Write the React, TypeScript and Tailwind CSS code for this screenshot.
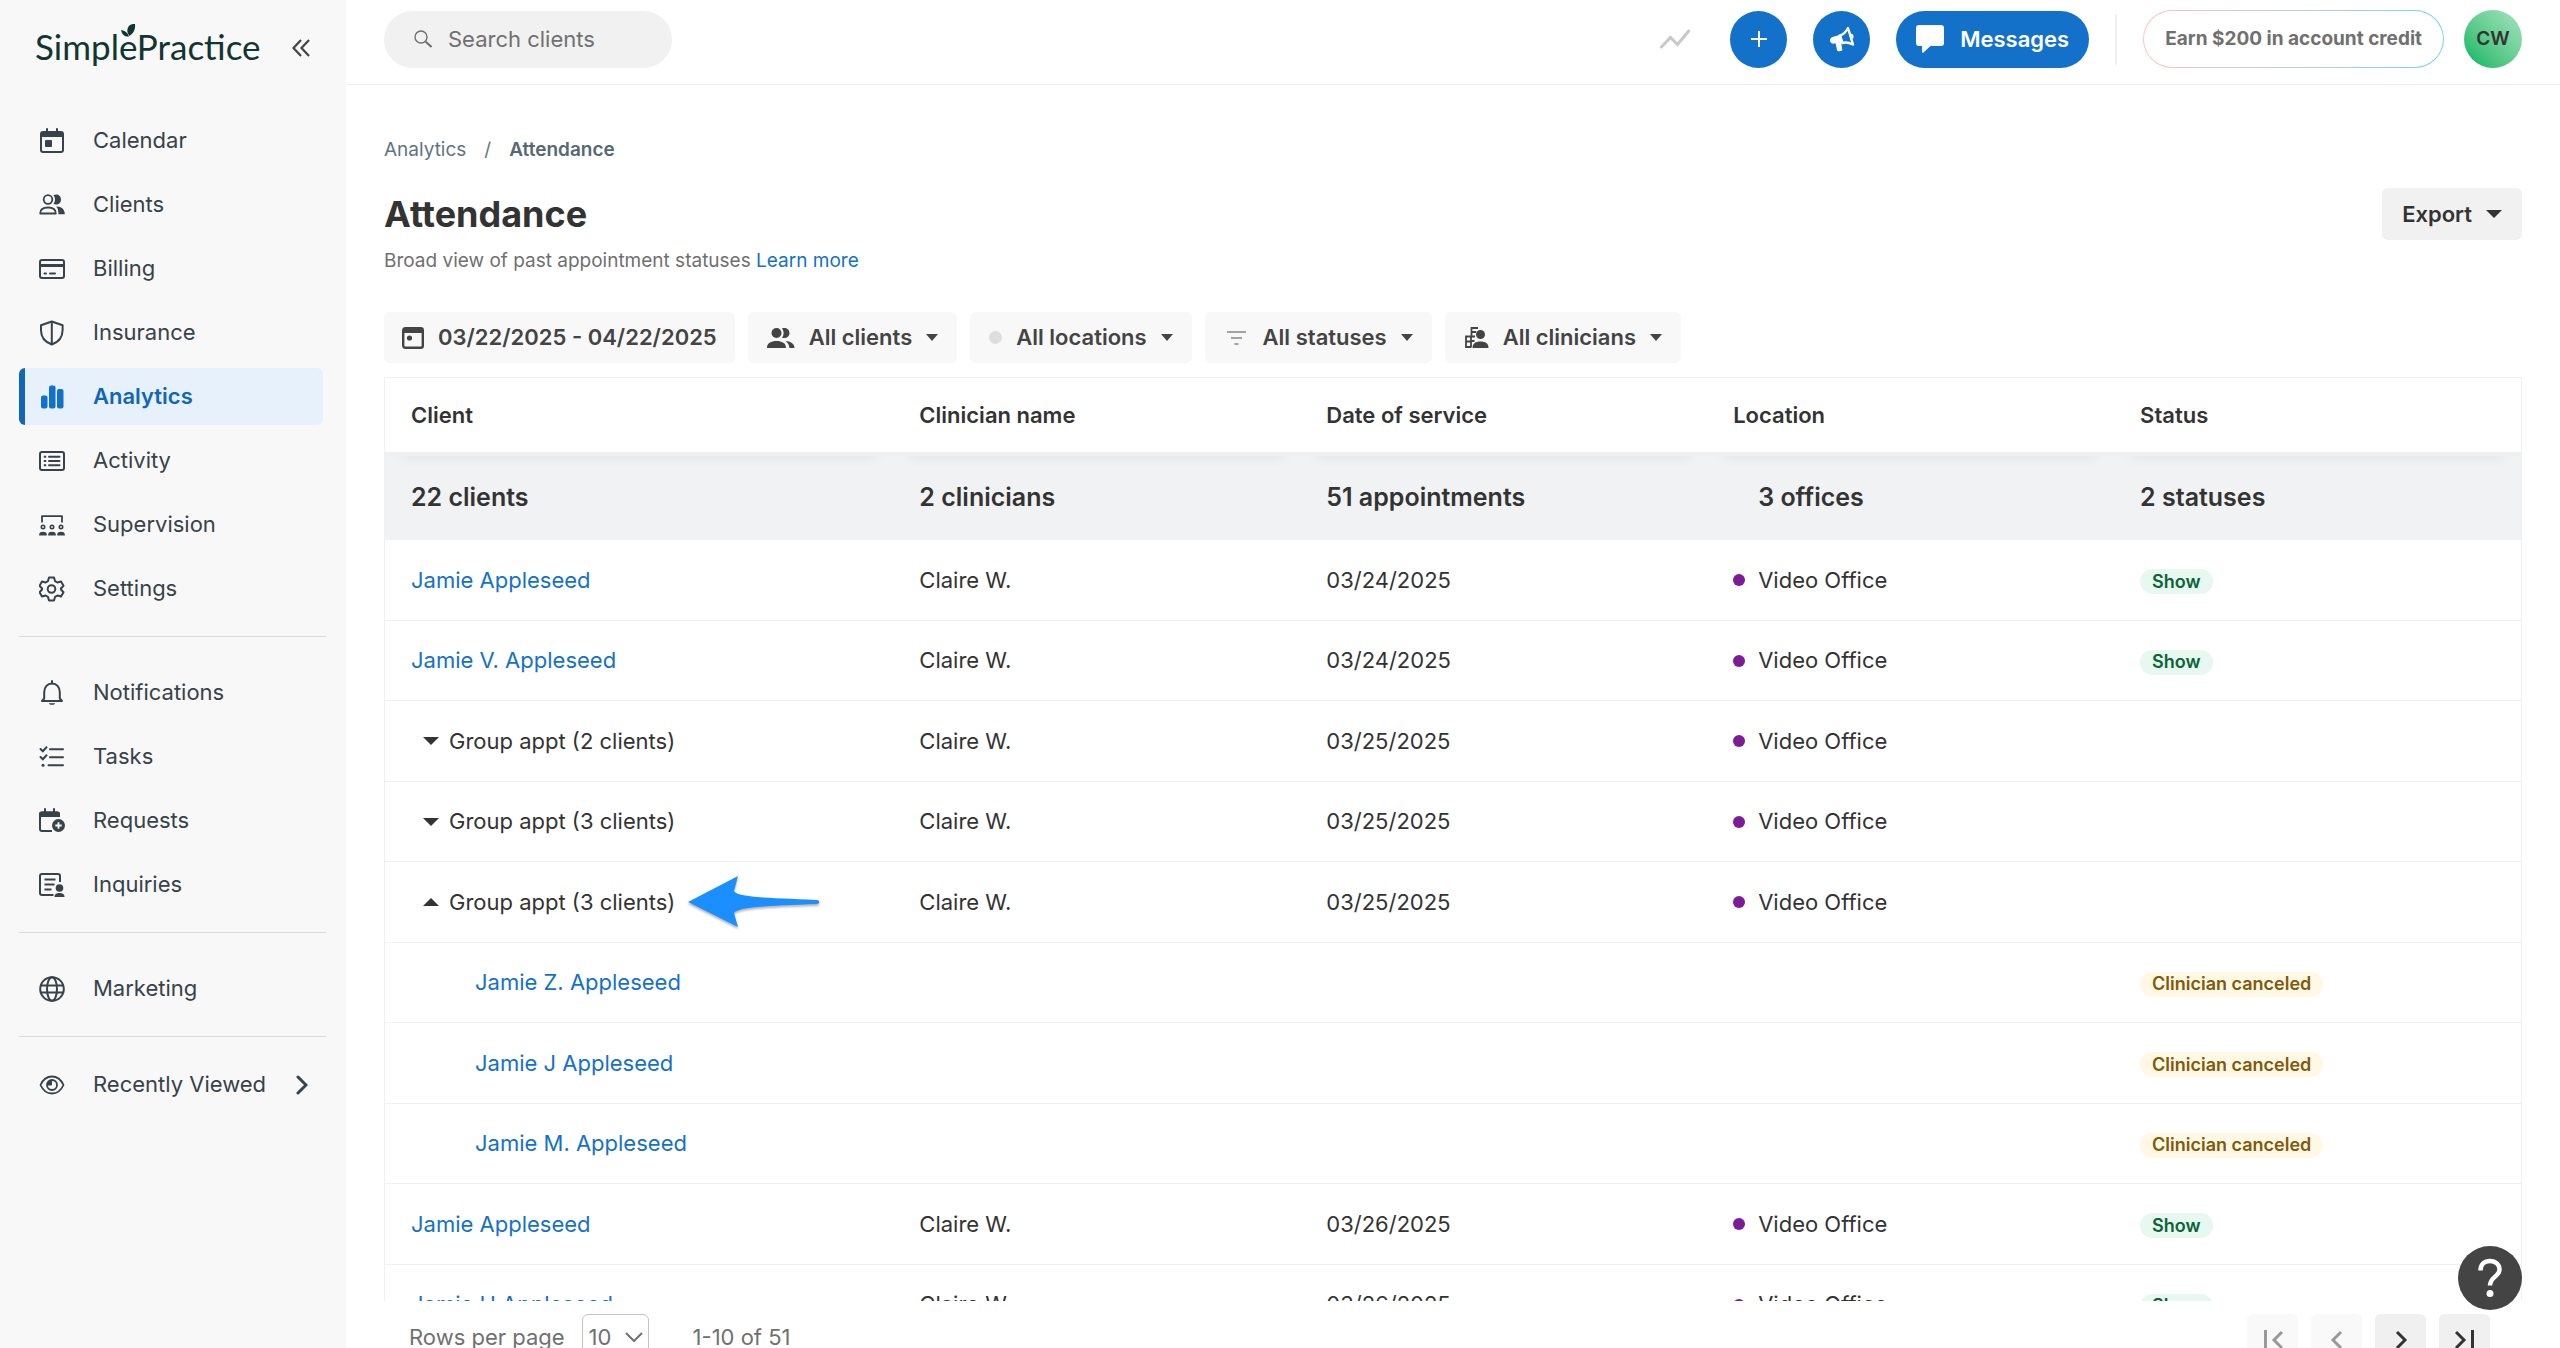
import React from "react";

const Icon = ({ children, className = "size-[26px]" }: { children: React.ReactNode; className?: string }) => (
  <svg viewBox="0 0 26 26" fill="none" stroke="currentColor" strokeWidth="2" className={`shrink-0 ${className}`} aria-hidden="true">
    {children}
  </svg>
);

const CalendarIcon = () => (
  <Icon>
    <rect x="2" y="4" width="22" height="20" rx="2" />
    <path d="M2 4h22v5H2z" fill="currentColor" stroke="none" />
    <path d="M8 1v3M18 1v3" strokeLinecap="round" />
    <rect x="6" y="12" width="7" height="7" rx="1" fill="currentColor" stroke="none" />
  </Icon>
);

const DateRangeIcon = () => (
  <svg viewBox="0 0 22 22" className="size-[22px] shrink-0" fill="none" stroke="currentColor" strokeWidth="2.4" aria-hidden="true">
    <rect x="1.2" y="1.2" width="19.6" height="19.6" rx="2" />
    <path d="M1 1h20v5H1z" fill="currentColor" stroke="none" />
    <circle cx="7.5" cy="11" r="2.6" fill="currentColor" stroke="none" />
  </svg>
);

const ClientsIcon = () => (
  <Icon>
    <circle cx="9" cy="7.5" r="4.3" strokeWidth="1.8" />
    <path d="M1.2 21.5c0-4 3.2-6 7.8-6s7.8 2 7.8 6z" strokeWidth="1.8" strokeLinejoin="round" />
    <path d="M14.5 3c4-1.6 7.5.6 7.5 4.5s-3.5 6-7.5 4.500c2-3 2-6 0-9zM17.2 14.5c5-.3 8.6 2.5 8.6 7.8h-6.3c0-3.300-.5-5.800-2.300-7.800z" fill="currentColor" stroke="none" />
  </Icon>
);

const BillingIcon = () => (
  <Icon>
    <rect x="1" y="4" width="24" height="18" rx="2" />
    <path d="M1 9.5h24" strokeWidth="3" />
    <path d="M5.500 17.500h1.500M11 17.500h5" strokeLinecap="round" />
  </Icon>
);

const InsuranceIcon = () => (
  <Icon>
    <path d="M12.8 1.5 2 5.2v5c0 7 4.5 12 10.8 14.3 6.3-2.3 10.8-7.3 10.8-14.3v-5zM12.8 1.5v23" strokeLinejoin="round" />
  </Icon>
);

const AnalyticsIcon = () => (
  <Icon>
    <g fill="#1471c9" stroke="none">
      <rect x="2" y="11.5" width="6.5" height="13" rx="2" />
      <rect x="10" y="1.5" width="6.5" height="23" rx="2" />
      <rect x="18" y="5" width="6.5" height="19.5" rx="2" />
    </g>
  </Icon>
);

const ActivityIcon = () => (
  <Icon>
    <rect x="1" y="4" width="24" height="18" rx="2" />
    <path d="M10 8.8h10.500M10 13h10.500M10 17.200h10.500" strokeLinecap="round" />
    <path d="M6 7.800v2M6 12v2M6 16.200v2" strokeWidth="2.4" />
  </Icon>
);

const SupervisionIcon = () => (
  <Icon>
    <path d="M3 10.500V4.200h20v6.300" strokeWidth="1.8" strokeLinejoin="round" />
    {[4, 13, 22].map((x) => (
      <g key={x}>
        <circle cx={x} cy="15" r="1.7" strokeWidth="1.6" />
        <path d={`M${x - 3.8} 23.5v-1c0-2 1.800-2.700 3.800-2.700s3.800.700 3.800 2.700v1z`} fill="currentColor" stroke="none" />
      </g>
    ))}
  </Icon>
);

const SettingsIcon = () => (
  <Icon>
    <circle cx="12.5" cy="13" r="3.8" />
    <path
      d="M10 1.500h5l1 3.600 2.400 1.400 3.600-1 2.500 4.300-2.600 2.700v1l2.600 2.700-2.500 4.300-3.600-1-2.400 1.400-1 3.600h-5l-1-3.600-2.400-1.400-3.600 1L.5 16.200l2.600-2.700v-1L.5 9.800 3 5.500l3.600 1L9 5.100z"
      strokeLinejoin="round"
    />
  </Icon>
);

const BellIcon = () => (
  <Icon>
    <path d="M3 21h20l-2.200-2.500V12c0-4.500-2.800-8.500-7.800-8.500S5.200 7.500 5.200 12v6.500z" strokeLinejoin="round" />
    <path d="M13 1v2.500" strokeLinecap="round" />
    <path d="M9.800 23.200h6.400c-.6 2-5.800 2-6.400 0z" fill="currentColor" stroke="none" />
  </Icon>
);

const TasksIcon = () => (
  <Icon>
    <path d="M11 5.200h13M11 13.200h13M9.500 21.200H24" strokeLinecap="round" />
    <path d="m1.500 5 2.300 2.200 3.700-4M1.500 13l2.300 2.200 3.700-4" strokeLinecap="round" />
    <circle cx="4" cy="21.2" r="1.5" fill="currentColor" stroke="none" />
  </Icon>
);

const RequestsIcon = () => (
  <Icon>
    <path d="M13 23H3c-1 0-2-.8-2-2V6.500c0-1 1-2 2-2h15c1 0 2 1 2 2" />
    <path d="M0 9V6c0-1.500 1-2.500 2.500-2.500h16C20 3.500 21 4.500 21 6v3z" fill="currentColor" stroke="none" />
    <path d="M6 1v3M15 1v3" strokeLinecap="round" />
    <circle cx="19.5" cy="17.5" r="6.5" fill="currentColor" stroke="none" />
    <path d="M19.500 14.300v6.400M16.300 17.500h6.400" stroke="#f8f8f8" strokeWidth="1.8" />
  </Icon>
);

const InquiriesIcon = () => (
  <Icon>
    <path d="M14.500 23H3c-1 0-2-.8-2-2V4c0-1 1-2 2-2h16c1 0 2 1 2 2v6" />
    <path d="M5.500 7.500h11M5.500 12.500h10M5.500 17.500h7" />
    <circle cx="20.5" cy="16" r="3.8" fill="currentColor" stroke="none" />
    <path d="M15.500 25c0-3 2-4 5-4s5 1 5 4z" fill="currentColor" stroke="none" />
  </Icon>
);

const GlobeIcon = () => (
  <Icon>
    <circle cx="13" cy="13" r="11.8" />
    <ellipse cx="13" cy="13" rx="5" ry="11.8" />
    <path d="M2 9.500h22M2 16.500h22" />
  </Icon>
);

const EyeIcon = () => (
  <Icon>
    <path d="M1.500 13C4 7.500 8 4.500 13 4.500S22 7.500 24.500 13c-2.500 5.500-6.500 8.500-11.500 8.500S4 18.500 1.500 13z" strokeWidth="1.8" />
    <circle cx="13" cy="13" r="5" strokeWidth="1.8" />
    <path d="M13 8v4c0 1-.5 1.500-1.500 1.500H8C8 10 10 8 13 8z" fill="currentColor" stroke="none" />
  </Icon>
);

const Caret = ({ className = "w-3 h-2", up = false }: { className?: string; up?: boolean }) => (
  <svg viewBox="0 0 12 7" preserveAspectRatio="none" fill="currentColor" className={`shrink-0 ${className}`} aria-hidden="true">
    <path d={up ? "M0 7h12L6 0z" : "M0 0h12L6 7z"} />
  </svg>
);

const mainNav = [
  { label: "Calendar", icon: <CalendarIcon /> },
  { label: "Clients", icon: <ClientsIcon /> },
  { label: "Billing", icon: <BillingIcon /> },
  { label: "Insurance", icon: <InsuranceIcon /> },
  { label: "Analytics", icon: <AnalyticsIcon />, active: true },
  { label: "Activity", icon: <ActivityIcon /> },
  { label: "Supervision", icon: <SupervisionIcon /> },
  { label: "Settings", icon: <SettingsIcon /> },
];

const workNav = [
  { label: "Notifications", icon: <BellIcon /> },
  { label: "Tasks", icon: <TasksIcon /> },
  { label: "Requests", icon: <RequestsIcon /> },
  { label: "Inquiries", icon: <InquiriesIcon /> },
];

const NavItem = ({ label, icon, active }: { label: string; icon: React.ReactNode; active?: boolean }) => (
  <a
    href="#"
    className={
      active
        ? "flex items-center gap-7 h-[57px] pl-[14px] rounded-md border-l-6 border-[#1266b8] bg-[#e6f1fb] text-[#1266b8] font-semibold"
        : "flex items-center gap-7 h-[57px] pl-5"
    }
  >
    {icon}
    {label}
  </a>
);

const Sidebar = () => (
  <aside className="w-[346px] shrink-0 bg-[#f8f8f8] pl-[19px] pr-5 text-[22px] text-[#37424a]">
    <div className="flex items-center justify-between h-24 px-4">
      <div className="relative pb-1 font-[Lato] text-[35px] leading-none text-[#123532]">
        SimplePractice
        <svg viewBox="0 0 16 14" className="absolute left-[85px] -top-[5px] w-4 h-[14px]" fill="currentColor" aria-hidden="true">
          <path d="M15 0c.6 5-1.200 9-5.500 12C7 9 6.500 6 8.500 2.500 10 .5 12 0 15 0z" />
          <path d="M1 6c4 .5 6.500 2.500 8 6.500C5 13 2 11 1 6z" />
        </svg>
      </div>
      <button aria-label="Collapse menu" className="text-[#444]">
        <svg viewBox="0 0 18 18" fill="none" stroke="currentColor" strokeWidth="2.2" className="size-[18px]">
          <path d="M9 1 1.500 9 9 17M17 1 9.500 9 17 17" />
        </svg>
      </button>
    </div>
    <nav>
      <div className="flex flex-col gap-[7px] pt-4 pr-[3px]">
        {mainNav.map((item) => (
          <NavItem key={item.label} {...item} />
        ))}
      </div>
      <hr className="mt-[19px] mb-[27px] border-[#dcdcdc]" />
      <div className="flex flex-col gap-[7px]">
        {workNav.map((item) => (
          <NavItem key={item.label} {...item} />
        ))}
      </div>
      <hr className="mt-[19px] mb-[27px] border-[#dcdcdc]" />
      <NavItem label="Marketing" icon={<GlobeIcon />} />
      <hr className="my-[19px] border-[#dcdcdc]" />
      <button className="flex items-center gap-7 w-full h-[57px] pl-5 pr-[18px]">
        <EyeIcon />
        <span className="whitespace-nowrap">Recently Viewed</span>
        <svg viewBox="0 0 12 20" fill="none" stroke="currentColor" strokeWidth="3" strokeLinecap="round" className="ml-auto w-3 h-5 shrink-0">
          <path d="m2 2 8 8-8 8" />
        </svg>
      </button>
    </nav>
  </aside>
);

const TopBar = () => (
  <header className="flex items-center justify-between h-[85px] pb-[6px] shrink-0 border-b border-[#f0f0f0] px-[38px]">
    <label className="flex items-center gap-4 w-72 h-[57px] rounded-full bg-[#f1f1f1] pl-[30px] pr-6 text-[22px] text-[#707070]">
      <svg viewBox="0 0 18 18" fill="none" stroke="currentColor" strokeWidth="1.4" className="size-[18px] shrink-0" aria-hidden="true">
        <circle cx="7" cy="7" r="6" />
        <path d="m11.500 11.500 6 5.500" strokeWidth="2" />
      </svg>
      <input type="text" aria-label="Search clients" placeholder="Search clients" className="w-full bg-transparent outline-none placeholder:text-[#707070]" />
    </label>
    <div className="flex items-center">
      <svg viewBox="0 0 32 22" fill="none" stroke="#c8c8c8" strokeWidth="3" className="w-8 h-[22px] mr-[39px]" aria-hidden="true">
        <path d="m1.500 20 10-10.500 7 7L30.500 2" />
      </svg>
      <button aria-label="Create" className="flex items-center justify-center size-[57px] rounded-full bg-[#1471c9] text-white mr-[26px]">
        <svg viewBox="0 0 18 18" stroke="currentColor" strokeWidth="2" className="size-[18px]">
          <path d="M9 1v16M1 9h16" />
        </svg>
      </button>
      <button aria-label="Announcements" className="flex items-center justify-center size-[57px] rounded-full bg-[#1471c9] text-white mr-[26px]">
        <svg viewBox="0 0 26 26" fill="none" stroke="currentColor" strokeWidth="2" className="size-[26px]">
          <path d="M11 9.500c3.500-1 6-3.500 8-7.500l5 16.500c-4-2-7.500-2.500-10.500-1.500z" strokeLinejoin="round" strokeWidth="2.4" />
          <path d="M12 8.500 3.500 11c-2 .6-3 2.500-2.400 4.300.6 2 2.200 2.800 4.200 2.300l8.200-1.600z" fill="currentColor" stroke="none" />
          <path d="m6.500 17 1.500 7c.2 1 1 1.500 2 1.300l2-.4c1-.2 1.500-1 1.200-2L12 16z" fill="currentColor" stroke="none" />
          <path d="M22 8.500c1.500.2 2.200 2.500 1 3.800" strokeWidth="2" />
        </svg>
      </button>
      <button className="flex items-center gap-4 h-[57px] rounded-full bg-[#1471c9] px-5 text-[22px] font-semibold text-white">
        <svg viewBox="0 0 28 28" fill="currentColor" className="size-7" aria-hidden="true">
          <path d="M3 0h22a3 3 0 0 1 3 3v15a3 3 0 0 1-3 3H14.500L7.500 27.500c-.8.600-1.500.3-1.500-.500v-6H3a3 3 0 0 1-3-3V3a3 3 0 0 1 3-3z" />
        </svg>
        Messages
      </button>
      <div className="w-[2px] h-[51px] bg-[#f0f0f0] mx-[26px]" />
      <button className="rounded-full bg-linear-to-r from-[#f9c3c8] to-[#70d3ef] p-px mr-5">
        <span className="flex items-center h-14 px-[21px] rounded-full bg-white text-[19px] font-bold text-[#707070]">
          Earn $200 in account credit
        </span>
      </button>
      <button className="flex items-center justify-center size-[58px] rounded-full bg-linear-to-tr from-[#1fbd70] from-15% to-[#92ddb2] to-85% text-[19px] font-semibold text-[#333]">
        CW
      </button>
    </div>
  </header>
);

const filters = [
  {
    label: "All clients",
    icon: (
      <svg viewBox="0 0 28 22" fill="currentColor" className="w-7 h-[22px]" aria-hidden="true">
        <circle cx="9.5" cy="6" r="5" />
        <path d="M0 21c0-5 4-7 9.500-7s9.500 2 9.500 7zM15 1.200c4-1 7.500 1 7.500 4.800s-3.500 5.800-7.500 4.800c2.200-3 2.200-6.500 0-9.600zM18.500 14c5 .3 9 2.500 9 7h-5c-.3-3-1.500-5.300-4-7z" />
      </svg>
    ),
  },
  { label: "All locations", icon: <span className="size-[13px] rounded-full bg-[#dddddd]" /> },
  {
    label: "All statuses",
    icon: (
      <svg viewBox="0 0 25 18" stroke="#a3a3a3" strokeWidth="2" className="w-[25px] h-[18px]" aria-hidden="true">
        <path d="M3 3h19M7 9h11M10.500 15h4" />
      </svg>
    ),
  },
  {
    label: "All clinicians",
    icon: (
      <svg viewBox="0 0 25 22" fill="currentColor" className="w-[25px] h-[22px]" aria-hidden="true">
        <circle cx="16.5" cy="7.5" r="4.5" />
        <path d="M8.500 21c0-4.500 3-6.500 8-6.500s8 2 8 6.500z" />
        <path d="M14 1H7.500v8.500H2V20h5.500M8 5h4M7 9.500h4M7.500 14h3M2 14.500h5M7 9v11" fill="none" stroke="currentColor" strokeWidth="1.8" />
      </svg>
    ),
  },
];

type Row = {
  client: string;
  kind?: "group" | "open" | "child";
  date?: string;
  status?: "Show" | "Clinician canceled";
};

const rows: Row[] = [
  { client: "Jamie Appleseed", date: "03/24/2025", status: "Show" },
  { client: "Jamie V. Appleseed", date: "03/24/2025", status: "Show" },
  { client: "Group appt (2 clients)", kind: "group", date: "03/25/2025" },
  { client: "Group appt (3 clients)", kind: "group", date: "03/25/2025" },
  { client: "Group appt (3 clients)", kind: "open", date: "03/25/2025" },
  { client: "Jamie Z. Appleseed", kind: "child", status: "Clinician canceled" },
  { client: "Jamie J Appleseed", kind: "child", status: "Clinician canceled" },
  { client: "Jamie M. Appleseed", kind: "child", status: "Clinician canceled" },
  { client: "Jamie Appleseed", date: "03/26/2025", status: "Show" },
  { client: "Jamie H Appleseed", date: "03/26/2025", status: "Show" },
];

const columns = ["Client", "Clinician name", "Date of service", "Location", "Status"];

const ClientCell = ({ row }: { row: Row }) => {
  if (row.kind === "group" || row.kind === "open") {
    return (
      <div className="flex items-center">
        <button className="flex items-center gap-[10px] pl-3">
          <Caret className="w-4 h-2" up={row.kind === "open"} />
          {row.client}
        </button>
        {row.kind === "open" && (
          <svg viewBox="0 0 134 54" className="ml-3 -my-4 w-[134px] h-[54px] drop-shadow-[0_2px_1px_rgba(0,0,0,0.3)]" fill="#1b8fff" aria-hidden="true">
            <path d="M1 27 51 1l-4 15c3 6 30 7 83 9 3 .2 3 3.800 0 4-53 2-80 3-83 9l4 14z" />
          </svg>
        )}
      </div>
    );
  }
  return (
    <a href="#" className={row.kind === "child" ? "pl-16 text-[#1471c9]" : "text-[#1471c9]"}>
      {row.client}
    </a>
  );
};

const AttendanceTable = () => (
  <table className="w-full table-fixed border-separate border-spacing-0 border-l border-r border-t border-[#f0f0f0] text-left text-[22px] text-[#333]">
    <thead>
      <tr>
        {columns.map((column, i) => (
          <th
            key={column}
            className={`${i === 0 ? "w-[23.8%]" : ""} relative z-10 h-[78px] pl-[26px] border-b-4 border-[#f0f0f0] bg-white font-semibold shadow-[0_18px_12px_-16px_rgba(0,0,0,0.06)]`}
          >
            {column}
          </th>
        ))}
      </tr>
      <tr className="bg-[#f1f2f4] text-[25px]">
        <th className="h-[84px] pl-[26px] font-semibold">22 clients</th>
        <th className="pl-[26px] font-semibold">2 clinicians</th>
        <th className="pl-[26px] font-semibold">51 appointments</th>
        <th className="pl-[51px] font-semibold">3 offices</th>
        <th className="pl-[26px] font-semibold">2 statuses</th>
      </tr>
    </thead>
    <tbody>
      {rows.map((row, i) => (
        <tr key={i} className="h-20 odd:h-[81px] *:border-b *:border-[#f0f0f0] *:pl-[26px]">
          <td className="whitespace-nowrap">
            <ClientCell row={row} />
          </td>
          <td>{row.date && "Claire W."}</td>
          <td>{row.date}</td>
          <td>
            {row.date && (
              <div className="flex items-center gap-[13px]">
                <span className="size-3 rounded-full bg-[#7b1b95]" />
                Video Office
              </div>
            )}
          </td>
          <td>
            {row.status && (
              <span
                className={`inline-flex items-center h-[25px] px-3 rounded-full align-middle text-lg font-semibold ${
                  row.status === "Show" ? "bg-[#e7f8f0] text-[#0b6338]" : "bg-[#fff8e4] text-[#80590b]"
                }`}
              >
                {row.status}
              </span>
            )}
          </td>
        </tr>
      ))}
    </tbody>
  </table>
);

const PageButton = ({ label, path, disabled }: { label: string; path: string; disabled?: boolean }) => (
  <button
    aria-label={label}
    disabled={disabled}
    className="flex items-center justify-center size-[51px] rounded-md bg-[#f0f0f0] text-[#333] disabled:bg-[#f9f9f9] disabled:text-[#999]"
  >
    <svg viewBox="0 0 20 20" fill="none" stroke="currentColor" strokeWidth="3" className="size-5">
      <path d={path} />
    </svg>
  </button>
);

const Pagination = () => (
  <footer className="flex items-start justify-between h-[47px] shrink-0 overflow-hidden pt-[13px] pl-[25px] pr-8 text-[22px] text-[#707070]">
    <div className="flex items-center h-[46px]">
      <label htmlFor="rows">Rows per page</label>
      <div className="relative flex items-center ml-[17px] mr-11">
        <select id="rows" className="appearance-none w-[67px] h-[46px] pl-[6px] rounded-md border border-[#c4c4c4] bg-white">
          <option>10</option>
          <option>25</option>
          <option>50</option>
        </select>
        <svg viewBox="0 0 18 10" fill="none" stroke="currentColor" strokeWidth="2" className="absolute right-[6px] w-[18px] h-[10px] pointer-events-none" aria-hidden="true">
          <path d="m1 1 8 8 8-8" />
        </svg>
      </div>
      1-10 of 51
    </div>
    <div className="flex gap-[13px]">
      <PageButton label="First page" path="M2.500 0v20M19 2l-8 8 8 8" disabled />
      <PageButton label="Previous page" path="m14 2-8 8 8 8" disabled />
      <PageButton label="Next page" path="m6 2 8 8-8 8" />
      <PageButton label="Last page" path="m1 2 8 8-8 8M17.500 0v20" />
    </div>
  </footer>
);

export default function App() {
  return (
    <div className="flex h-screen overflow-hidden bg-white font-[Inter,sans-serif]">
      <Sidebar />
      <div className="flex flex-col flex-1 min-w-0">
        <TopBar />
        <main className="flex flex-col flex-1 min-h-0 px-[38px]">
          <nav className="flex gap-[18px] pt-[50px] text-[19px] leading-[30px] text-[#607480]">
            <a href="#">Analytics</a>
            <span>/</span>
            <span className="font-semibold text-[#566873]">Attendance</span>
          </nav>
          <div className="flex items-center justify-between pt-[23px]">
            <h1 className="text-[36px] leading-[52px] font-bold text-[#333]">Attendance</h1>
            <button className="flex items-center gap-[14px] h-[52px] px-5 rounded-md bg-[#f1f1f1] text-[22px] font-semibold text-[#333]">
              Export
              <Caret className="w-4 h-2" />
            </button>
          </div>
          <p className="pt-[6px] text-[19px] leading-[30px] text-[#707070]">
            Broad view of past appointment statuses{" "}
            <a href="#" className="text-[#1471c9]">
              Learn more
            </a>
          </p>
          <div className="flex gap-[13px] pt-9 pb-[14px] text-[22px] font-semibold text-[#444]">
            <button className="flex items-center gap-[14px] h-[51px] px-[18px] rounded-md bg-[#f8f8f8]">
              <DateRangeIcon />
              03/22/2025 - 04/22/2025
            </button>
            {filters.map((filter) => (
              <button key={filter.label} className="flex items-center gap-[14px] h-[51px] px-[19px] rounded-md bg-[#f8f8f8]">
                {filter.icon}
                {filter.label}
                <Caret className="w-3 h-[7px]" />
              </button>
            ))}
          </div>
          <div className="flex-1 min-h-0 overflow-hidden">
            <AttendanceTable />
          </div>
          <Pagination />
        </main>
      </div>
      <button aria-label="Help" className="fixed right-[38px] bottom-[38px] flex items-center justify-center size-16 rounded-full bg-[#444] text-white">
        <svg viewBox="0 0 24 40" fill="none" stroke="currentColor" strokeWidth="4.5" className="w-6 h-10">
          <path d="M2.500 12.500C2.500 6 6.500 3 12 3s9.500 3.500 9.500 8.500c0 7-9.500 7.500-9.500 16" />
          <circle cx="12" cy="35.5" r="3.5" fill="currentColor" stroke="none" />
        </svg>
      </button>
    </div>
  );
}
